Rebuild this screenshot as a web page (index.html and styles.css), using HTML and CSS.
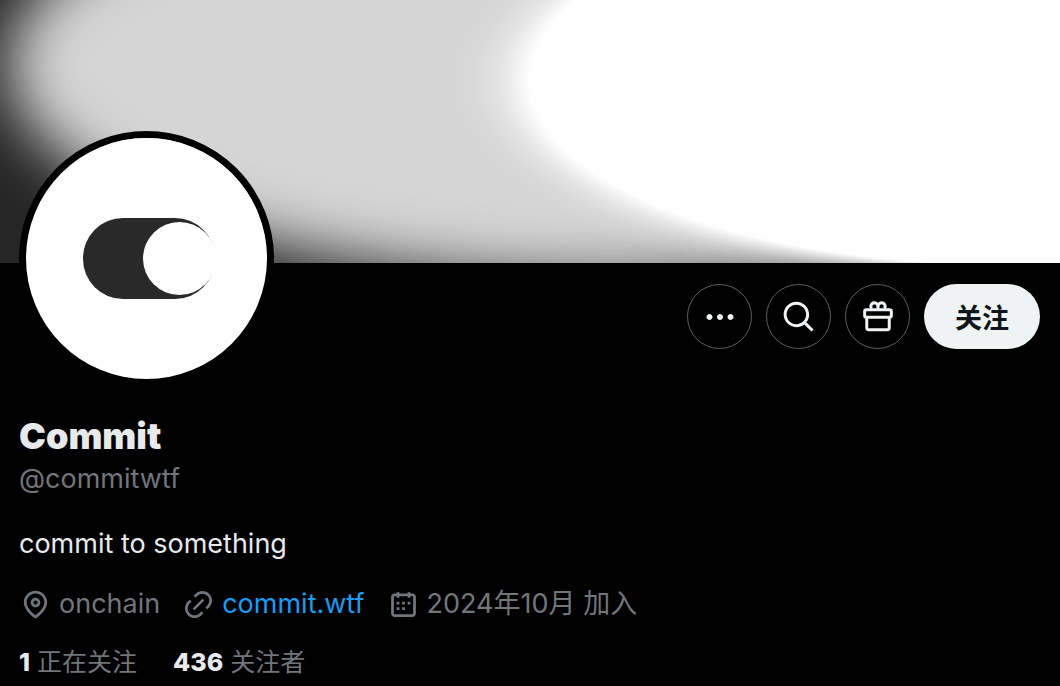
FILE: index.html
```html
<!DOCTYPE html>
<html lang="zh-CN">

<head>
    <meta charset="UTF-8">
    <meta name="viewport" content="width=device-width, initial-scale=1.0">
    <title>Commit (@commitwtf)</title>

    <link rel="stylesheet" href="styles.css">
</head>

<body>
    <svg class="banner" viewBox="0 0 1060 263" preserveAspectRatio="none" aria-hidden="true">
        <defs>
            <filter id="soft" x="-20%" y="-30%" width="140%" height="160%" color-interpolation-filters="sRGB">
                <feGaussianBlur stdDeviation="30" />
            </filter>
            <radialGradient id="knob">
                <stop offset="0.848" stop-color="#fff" />
                <stop offset="0.875" stop-color="#fff" stop-opacity="0.65" />
                <stop offset="0.91" stop-color="#fff" stop-opacity="0.3" />
                <stop offset="0.95" stop-color="#fff" stop-opacity="0.1" />
                <stop offset="1" stop-color="#fff" stop-opacity="0" />
            </radialGradient>
        </defs>
        <rect width="1060" height="263" fill="#262626" />
        <ellipse cx="610" cy="65" rx="602" ry="216" fill="#d5d5d5" filter="url(#soft)" />
        <ellipse cx="1010" cy="80" rx="566" ry="218" fill="url(#knob)" />
    </svg>

    <main class="profile">
        <div class="profile-top">
            <svg class="avatar" viewBox="0 0 241 241" role="img" aria-label="Commit">
                <rect width="241" height="241" fill="#fff" />
                <rect x="57" y="80" width="132" height="81" rx="40" fill="#292929" />
                <circle cx="153.5" cy="120.5" r="36.5" fill="#fff" />
            </svg>
            <div class="actions">
                <button type="button" class="icon-button" aria-label="更多">
                    <svg viewBox="0 0 24 24"><path d="M3 12c0-1.1.9-2 2-2s2 .9 2 2-.9 2-2 2-2-.9-2-2zm9 2c1.1 0 2-.9 2-2s-.9-2-2-2-2 .9-2 2 .9 2 2 2zm7 0c1.1 0 2-.9 2-2s-.9-2-2-2-2 .9-2 2 .9 2 2 2z" /></svg>
                </button>
                <button type="button" class="icon-button" aria-label="搜索">
                    <svg viewBox="0 0 24 24"><path d="M10.25 3.75c-3.59 0-6.5 2.91-6.5 6.5s2.91 6.5 6.5 6.5c1.795 0 3.419-.726 4.596-1.904 1.178-1.177 1.904-2.801 1.904-4.596 0-3.59-2.91-6.5-6.5-6.5zm-8.5 6.5c0-4.694 3.806-8.5 8.5-8.5s8.5 3.806 8.5 8.5c0 1.986-.682 3.815-1.824 5.262l4.781 4.781-1.414 1.414-4.781-4.781c-1.447 1.142-3.276 1.824-5.262 1.824-4.694 0-8.5-3.806-8.5-8.5z" /></svg>
                </button>
                <button type="button" class="icon-button" aria-label="赠送">
                    <svg class="gift" viewBox="0 0 24 24">
                        <rect x="3.1" y="7.2" width="17.8" height="5" rx="1.2" />
                        <path d="M4.5 12.2v7a1.3 1.3 0 0 0 1.3 1.3h12.4a1.3 1.3 0 0 0 1.3-1.3v-7" />
                        <path d="M12 7.2V4.9a2.4 2.4 0 1 0-4.3 1.5M12 7.2V4.9a2.4 2.4 0 1 1 4.3 1.5" />
                    </svg>
                </button>
                <button type="button" class="follow-button">关注</button>
            </div>
        </div>

        <h1>Commit</h1>
        <p class="handle">@commitwtf</p>
        <p class="bio">commit to something</p>

        <div class="meta">
            <span class="meta-item">
                <svg viewBox="0 0 24 24" aria-hidden="true"><path d="M12 7c-1.93 0-3.5 1.57-3.5 3.5S10.07 14 12 14s3.5-1.57 3.5-3.5S13.93 7 12 7zm0 5c-.827 0-1.5-.673-1.5-1.5S11.173 9 12 9s1.5.673 1.5 1.5S12.827 12 12 12zm0-10c-4.687 0-8.5 3.813-8.5 8.5 0 5.967 7.621 11.116 7.945 11.332l.555.37.555-.37c.324-.216 7.945-5.365 7.945-11.332C20.5 5.813 16.687 2 12 2zm0 17.77c-1.665-1.241-6.5-5.196-6.5-9.27C5.5 6.916 8.416 4 12 4s6.5 2.916 6.5 6.5c0 4.073-4.835 8.028-6.5 9.27z" /></svg>
                onchain
            </span>
            <a class="meta-item" href="#">
                <svg viewBox="0 0 24 24" aria-hidden="true"><path d="M18.36 5.64c-1.95-1.96-5.11-1.96-7.07 0L9.88 7.05 8.46 5.64l1.42-1.42c2.73-2.73 7.16-2.73 9.9 0 2.73 2.74 2.73 7.17 0 9.9l-1.42 1.42-1.41-1.42 1.41-1.41c1.96-1.96 1.96-5.12 0-7.07zm-2.12 3.53l-7.07 7.07-1.41-1.41 7.07-7.07 1.41 1.41zm-12.02.71l1.42-1.42 1.41 1.42-1.41 1.41c-1.96 1.96-1.96 5.12 0 7.07 1.95 1.96 5.11 1.96 7.07 0l1.41-1.41 1.42 1.41-1.42 1.42c-2.73 2.73-7.16 2.73-9.9 0-2.73-2.74-2.73-7.17 0-9.9z" /></svg>
                commit.wtf
            </a>
            <span class="meta-item">
                <svg viewBox="0 0 24 24" aria-hidden="true"><path d="M7 4V3h2v1h6V3h2v1h1.5C19.89 4 21 5.12 21 6.5v12c0 1.38-1.11 2.5-2.5 2.5h-13C4.12 21 3 19.88 3 18.5v-12C3 5.12 4.12 4 5.5 4H7zm0 2H5.5c-.27 0-.5.22-.5.5v12c0 .28.23.5.5.5h13c.28 0 .5-.22.5-.5v-12c0-.28-.22-.5-.5-.5H17v1h-2V6H9v1H7V6zm0 6h2v-2H7v2zm0 4h2v-2H7v2zm4-4h2v-2h-2v2zm0 4h2v-2h-2v2zm4-4h2v-2h-2v2z" /></svg>
                2024年10月 加入
            </span>
        </div>

        <div class="stats">
            <a href="#"><strong>1</strong> 正在关注</a>
            <a href="#"><strong>436</strong> 关注者</a>
        </div>
    </main>
</body>

</html>
```
FILE: styles.css
```css
body {
    background-color: black;
    color: #e7e9ea;
    font-family: Inter, "Noto Sans CJK SC", sans-serif;
    font-size: 27px;
    font-variant-ligatures: none;
    line-height: 36px;
    margin: 0;
}

.banner {
    display: block;
    width: 100%;
    height: 263px;
}

.profile {
    padding: 0 20px 0 19px;
}

.profile-top {
    display: flex;
    justify-content: space-between;
    align-items: flex-start;
}

/* The avatar hangs over the lower edge of the banner */
.avatar {
    position: relative;
    width: 241px;
    height: 241px;
    margin-top: -132px;
    border: 7px solid black;
    border-radius: 50%;
}

.actions {
    display: flex;
    gap: 14px;
    padding-top: 21px;
}

.icon-button {
    display: flex;
    justify-content: center;
    align-items: center;
    width: 65px;
    height: 65px;
    padding: 0;
    background-color: transparent;
    border: 1px solid #5a5f62;
    border-radius: 50%;
    cursor: pointer;
}

.icon-button svg {
    width: 36px;
    height: 36px;
    fill: #eff3f4;
}

.icon-button .gift {
    fill: none;
    stroke: #eff3f4;
    stroke-width: 2;
}

.follow-button {
    height: 65px;
    padding: 0 31px;
    background-color: #eff3f4;
    color: #0f1419;
    border: none;
    border-radius: 33px;
    font-family: inherit;
    font-size: 27px;
    font-weight: 600;
    cursor: pointer;
}

h1 {
    margin: 28px 0 0;
    font-size: 36px;
    font-weight: 900;
    line-height: 44px;
}

p {
    margin: 0;
}

.handle {
    padding-top: 3px;
    color: #71767b;
}

.bio {
    padding-top: 29px;
}

.meta {
    display: flex;
    flex-wrap: wrap;
    gap: 0 22px;
    padding-top: 24px;
    color: #71767b;
}

.meta-item {
    display: flex;
    align-items: center;
    gap: 7px;
}

.meta-item svg {
    width: 33px;
    height: 33px;
    fill: #71767b;
}

a.meta-item {
    color: #1d9bf0;
    text-decoration: none;
}

.stats {
    display: flex;
    gap: 36px;
    padding-top: 22px;
    font-size: 25px;
}

.stats a {
    color: #71767b;
    text-decoration: none;
}

.stats strong {
    color: #e7e9ea;
    font-weight: 800;
}
```
